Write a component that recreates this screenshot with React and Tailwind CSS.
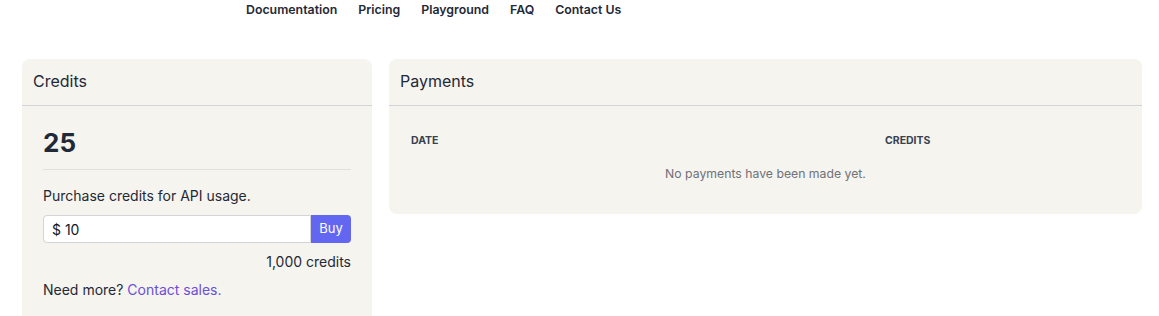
import React from "react";

function Nav() {
  return (
    <nav className="flex h-[21px] items-center gap-[21px] pl-[246px] text-[12.35px] font-semibold text-[#1f2937]">
      <a>Documentation</a>
      <a>Pricing</a>
      <a>Playground</a>
      <a>FAQ</a>
      <a>Contact Us</a>
    </nav>
  );
}

function CreditsCard() {
  return (
    <div className="w-[350px] shrink-0 rounded-lg bg-[#f5f4ee]">
      <div className="flex h-[47px] items-center border-b border-[#d4d4d8] px-[11px] pb-[2px] text-[16px] text-[#1f2937]">
        Credits
      </div>
      <div className="px-[21px] pb-[30px] pt-[21px]">
        <div className="border-b border-[#e1e0db] pb-[10px] text-[26px] font-bold leading-[32px] text-[#1f2937]">
          25
        </div>
        <p className="mt-[16px] text-[14px] leading-[20px] text-[#1f2937]">
          Purchase credits for API usage.
        </p>
        <div className="mt-[9px] flex h-[28px]">
          <input
            defaultValue="$ 10"
            className="min-w-0 flex-1 rounded-l border border-[#d4d4d8] bg-white px-[8px] text-[14px] text-[#111827] outline-none"
          />
          <button className="w-[40px] rounded-r bg-[#6366f1] text-[13px] text-white">
            Buy
          </button>
        </div>
        <p className="mt-[9px] text-right text-[14px] leading-[20px] text-[#1f2937]">
          1,000 credits
        </p>
        <p className="mt-[8px] text-[14px] leading-[20px] text-[#1f2937]">
          Need more? <a className="text-[#6b4fd8]">Contact sales.</a>
        </p>
      </div>
    </div>
  );
}

function PaymentsCard() {
  return (
    <div className="flex-1 self-start rounded-lg bg-[#f5f4ee]">
      <div className="flex h-[47px] items-center border-b border-[#d4d4d8] px-[11px] pb-[2px] text-[16px] text-[#1f2937]">
        Payments
      </div>
      <div className="px-[22px] pb-[31px] pt-[27px]">
        <div className="grid grid-cols-[474px_1fr] text-[10.5px] font-bold uppercase leading-[16px] text-[#374151]">
          <div>Date</div>
          <div>Credits</div>
        </div>
        <p className="mt-[16px] text-center text-[12.25px] leading-[18px] text-[#71717a]">
          No payments have been made yet.
        </p>
      </div>
    </div>
  );
}

export default function App() {
  return (
    <div className="min-h-screen bg-white font-['Inter',sans-serif]">
      <Nav />
      <main className="flex items-start gap-[17px] pl-[22px] pr-[17px] pt-[38px]">
        <CreditsCard />
        <PaymentsCard />
      </main>
    </div>
  );
}
